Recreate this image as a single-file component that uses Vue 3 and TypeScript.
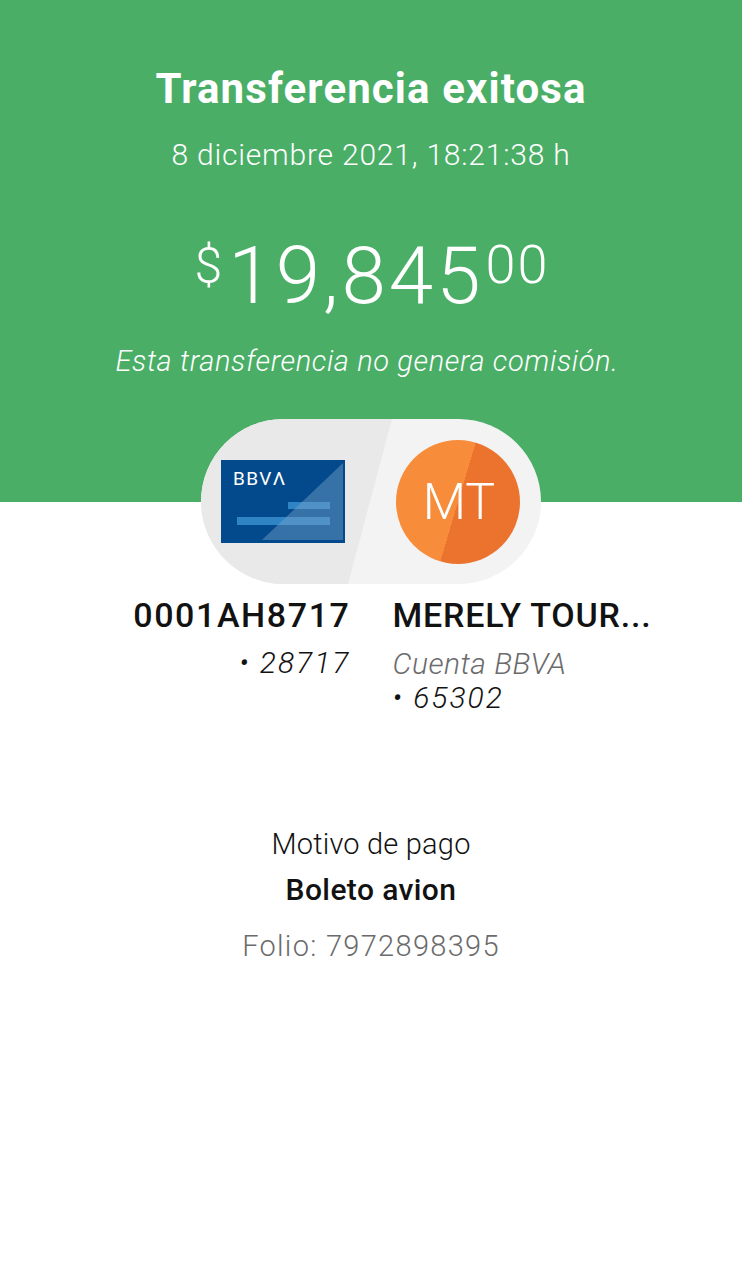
<template>
  <div class="page">
    <header class="hero">
      <h1 class="title">Transferencia exitosa</h1>
      <p class="date">8 diciembre 2021, 18:21:38 h</p>
      <p class="amount"><sup class="currency">$</sup>{{ amount }}<sup class="cents">{{ cents }}</sup></p>
      <p class="note">Esta transferencia no genera comisión.</p>
    </header>

    <div class="pill">
      <div class="pill-left"></div>
      <svg class="card" width="124" height="83" viewBox="0 0 124 83">
        <rect width="124" height="83" fill="#034a8c" />
        <rect x="67" y="42" width="42" height="7" fill="#2f84c4" />
        <rect x="16" y="57" width="93" height="8" fill="#2f84c4" />
        <polygon points="122,3 122,80 41,80" fill="#7fa6cc" fill-opacity="0.42" />
        <text x="12" y="25" class="card-logo">BBVΛ</text>
      </svg>
      <div class="avatar">
        <span class="initials">MT</span>
      </div>
    </div>

    <section class="accounts">
      <div class="account from">
        <div class="account-name">0001AH8717</div>
        <div class="account-num">• 28717</div>
      </div>
      <div class="account to">
        <div class="account-name">MERELY TOUR...</div>
        <div class="account-bank">Cuenta BBVA</div>
        <div class="account-num second">• 65302</div>
      </div>
    </section>

    <section class="details">
      <div class="reason-label">Motivo de pago</div>
      <div class="reason">Boleto avion</div>
      <div class="folio">Folio: {{ folio }}</div>
    </section>
  </div>
</template>

<script setup lang="ts">
const amount: string = '19,845'
const cents: string = '00'
const folio: string = '7972898395'
</script>

<style>
html,
body {
  margin: 0;
  background: #fff;
}
</style>

<style scoped>
.page {
  width: 742px;
  height: 1280px;
  overflow: hidden;
  background: #fff;
  font-family: Roboto, 'Liberation Sans', sans-serif;
  color: #121212;
}

.hero {
  height: 502px;
  box-sizing: border-box;
  padding-top: 63px;
  background: #4aae66;
  color: #fff;
  text-align: center;
}

.title {
  margin: 0;
  font-size: 42px;
  line-height: 52px;
  font-weight: 700;
  letter-spacing: 1.1px;
}

.date {
  margin: 20px 0 0;
  font-size: 30px;
  line-height: 40px;
  font-weight: 300;
  letter-spacing: 0.8px;
}

.amount {
  margin: 51px 0 0;
  padding-left: 2px;
  font-size: 80px;
  line-height: 100px;
  font-weight: 300;
  letter-spacing: 3px;
}

.currency,
.cents {
  font-size: 54px;
  line-height: 0;
  vertical-align: 20px;
  letter-spacing: 2px;
}

.currency {
  font-size: 50px;
  margin-right: 4px;
}

.cents {
  margin-left: 2px;
}

.note {
  margin: 16px 0 0;
  padding-right: 8px;
  font-size: 29px;
  line-height: 38px;
  font-style: italic;
  font-weight: 300;
  letter-spacing: 0.63px;
}

.pill {
  position: relative;
  display: flex;
  align-items: center;
  width: 340px;
  height: 165px;
  margin: -83px 0 0 201px;
  border-radius: 83px;
  overflow: hidden;
  background: #f3f3f3;
}

.pill-left {
  position: absolute;
  inset: 0;
  background: #e9e9e9;
  clip-path: polygon(0 0, 191px 0, 147px 100%, 0 100%);
}

.card {
  position: relative;
  margin-left: 20px;
}

.card-logo {
  fill: #fff;
  font-size: 19px;
  font-weight: 400;
  letter-spacing: 1.4px;
}

.avatar {
  position: relative;
  display: flex;
  align-items: center;
  justify-content: center;
  width: 124px;
  height: 124px;
  margin-left: 51px;
  border-radius: 50%;
  background: linear-gradient(106.6deg, #f78c3b 0 50%, #ec732d 50% 100%);
}

.initials {
  padding-left: 2px;
  color: #fff;
  font-size: 50px;
  font-weight: 300;
}

.accounts {
  display: flex;
  gap: 42px;
  margin-top: 9px;
}

.account {
  width: 350px;
}

.from {
  width: 351px;
  text-align: right;
}

.account-name {
  font-size: 34px;
  line-height: 44px;
  font-weight: 500;
  white-space: nowrap;
  letter-spacing: 0.8px;
}

.from .account-name {
  letter-spacing: 1.6px;
}

.account-bank {
  margin-top: 9px;
  color: #6b6b6b;
  font-size: 30px;
  line-height: 36px;
  font-style: italic;
  font-weight: 300;
  letter-spacing: 0.5px;
}

.account-num {
  margin-top: 11px;
  font-size: 30px;
  line-height: 30px;
  font-style: italic;
  font-weight: 300;
  letter-spacing: 2px;
}

.account-num.second {
  margin-top: 1px;
}

.details {
  margin-top: 111px;
  text-align: center;
}

.reason-label {
  font-size: 29px;
  line-height: 40px;
  font-weight: 300;
  letter-spacing: 0.2px;
}

.reason {
  margin-top: 6px;
  font-size: 30px;
  line-height: 40px;
  font-weight: 500;
  letter-spacing: 0.4px;
}

.folio {
  margin-top: 16px;
  color: #6b6b6b;
  font-size: 29px;
  line-height: 40px;
  font-weight: 300;
  letter-spacing: 1.3px;
}
</style>
